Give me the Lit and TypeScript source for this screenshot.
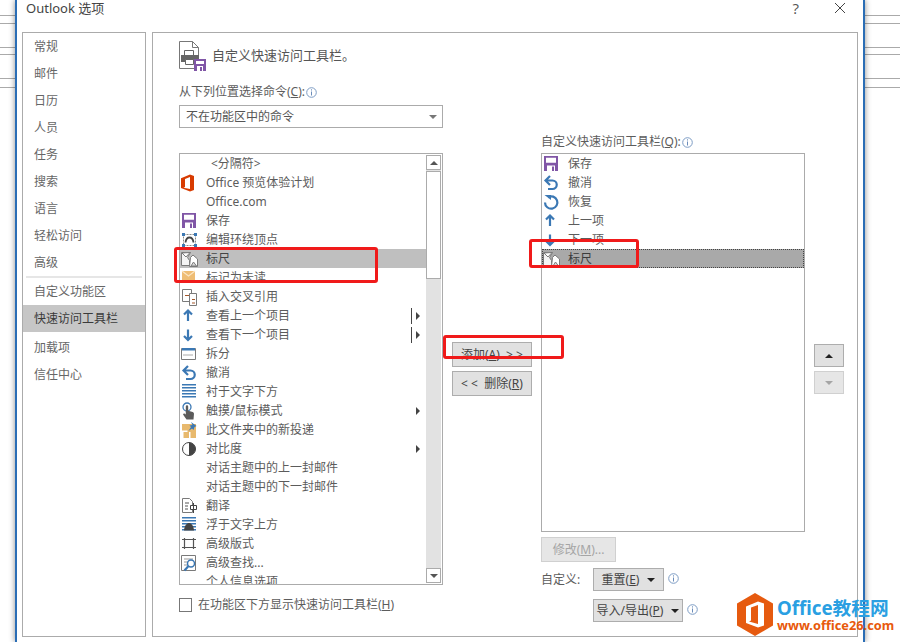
import { LitElement, html, css, svg } from "lit";
import { customElement } from "lit/decorators.js";

const BLUE = "#3b78b4";
const GREY = "#7a7a7a";
const PURPLE = "#8056a6";

const saveIcon = svg`<path fill="${PURPLE}" d="M1 1h14v15H1z"/><path fill="#fff" d="M3 2.800h10v5H3zM4 10.500h8V16H4z"/><path fill="${PURPLE}" d="M9 11.500h2V16H9z"/>`;

const stripes = svg`<g fill="${BLUE}"><path d="M1 1h14v1.600H1zM1 4h14v1.600H1zM1 7h14v1.600H1zM1 10h14v1.600H1zM1 13h14v1.600H1z"/></g>`;

const icons: Record<string, unknown> = {
  office: svg`<path fill="#d83b01" fill-rule="evenodd" d="M0 4.200 9 .6l4 1.400v14l-4 1.500-9-3.400ZM9 3 4 5v8l-1.500.8L9 15Z"/>`,
  save: saveIcon,
  wrap: svg`<path fill="none" stroke="#8a8a8a" d="M2.500 3.500h12v11h-12z" stroke-dasharray="2 1"/><path fill="none" stroke="#444" stroke-width="1.800" d="M4.500 11.500C5 7.500 7 6.500 8.500 6.500s3.500 1 4 5"/><path fill="${BLUE}" d="M1 2h3v3H1zM13 2h3v3h-3zM1 13h3v3H1zM13 13h3v3h-3z"/>`,
  ruler: svg`<path fill="#f4f4f4" stroke="${GREY}" d="M.5 2.500h9l-3 5 2 3v5h-8z"/><path fill="#fff" stroke="${GREY}" d="M9.500 7.500 12 5l4.500 4v7.500h-8z"/><path fill="#fff" stroke="${GREY}" d="M1 3l4 4 4-4.500z"/><path fill="#d9d9d9" stroke="${GREY}" d="m10 16 2.500-4 3 4z"/>`,
  mail: svg`<path fill="#efbd74" d="M1 2h13v10H1z"/><path fill="none" stroke="#fbe6c4" stroke-width="1.200" d="m1 2 6.500 5L14 2"/>`,
  xref: svg`<path fill="#fff" stroke="${GREY}" d="M1.500 1.500h9v12h-9z"/><path fill="#fff" stroke="${GREY}" d="M8.500 5.500h7v12h-7z"/><path fill="none" stroke="#a5582a" stroke-width="1.200" d="M4 7.500h4M11 11.500h3M11 15h3"/>`,
  up: svg`<path fill="none" stroke="${BLUE}" stroke-width="2.200" d="M7 14V4M3 7.500l4-4 4 4"/>`,
  down: svg`<path fill="none" stroke="${BLUE}" stroke-width="2.200" d="M7 3.500v10M3 10l4 4 4-4"/>`,
  split: svg`<path fill="#fff" stroke="${GREY}" d="M.5 3.500h14v11H.5z"/><path fill="${BLUE}" d="M1 3h13v2.500H1z"/><path stroke="#555" stroke-dasharray="1 1" d="M2.500 10h10"/>`,
  undo: svg`<path fill="none" stroke="${BLUE}" stroke-width="2.200" d="M3 6.500h6.500a4 4 0 0 1 0 8.500H5M7 2 2.500 6.500 7 11"/>`,
  redo: svg`<path fill="none" stroke="${BLUE}" stroke-width="2.200" d="M5 4.200a6.200 6.200 0 1 1-3 5.300"/><path fill="${BLUE}" d="M1.500 2h6.500v5z"/>`,
  behind: stripes,
  touch: svg`<circle cx="6" cy="5" r="4" fill="none" stroke="${BLUE}" stroke-width="1.300"/><path fill="#5b5b5b" d="M4.800 4.500a1.200 1.200 0 0 1 2.400 0v4.200l4.500 1.300q1.300.4 1.300 1.800l-.5 5.700H5.500L2 12.500l1-1.200 1.800 1.200Z"/>`,
  folder: svg`<path fill="#e8b96d" d="M1 3h14v14H1z"/><path fill="#fff" d="M1 9.500h5.500V11H2.500v6H1zM8 11h1.500v6H8z"/><path fill="${BLUE}" d="m10 1 5.500 4-2 1-1 3-1.500-1.500-3.500 2.500 2.500-4-1.500-1.500 3-.5z"/>`,
  contrast: svg`<circle cx="8" cy="9" r="6.500" fill="#fff" stroke="#444"/><path fill="#444" d="M8 2.500a6.500 6.500 0 0 1 0 13z"/>`,
  blank: svg``,
  translate: svg`<path fill="#fff" stroke="${GREY}" d="M1.500 1.500h7l3 3v11h-10z"/><path fill="none" stroke="#555" d="M4 6h4M4 9h3M4 12h3"/><path fill="#fff" stroke="#444" d="M9.500 8.500h6v4h-6z"/><path stroke="#444" d="M12.500 6v10"/>`,
  float: svg`${stripes}<path fill="#444" d="M3 14.500C3.500 9 6 7 8 7s4.500 2 5 7.500z"/>`,
  layout: svg`<path fill="none" stroke="#555" stroke-width="1.200" d="M3.500 3v11M12.500 3v11M1 4.500h14M1 12.500h14"/>`,
  find: svg`<path fill="#fff" stroke="${GREY}" d="M.5 1.500h14v15H.5z"/><path stroke="#999" d="M3 5h9M3 8h4M3 11h3"/><circle cx="10" cy="9.500" r="3.500" fill="#fff" stroke="${BLUE}" stroke-width="1.500"/><path stroke="${BLUE}" stroke-width="2.200" d="m7.500 12-4 4.500"/>`,
};

type Row = { i: string; t: string; sub?: "bar" | "arrow"; sel?: boolean; sep?: boolean };

const leftRows: Row[] = [
  { i: "blank", t: "<分隔符>", sep: true },
  { i: "office", t: "Office 预览体验计划" },
  { i: "blank", t: "Office.com" },
  { i: "save", t: "保存" },
  { i: "wrap", t: "编辑环绕顶点" },
  { i: "ruler", t: "标尺", sel: true },
  { i: "mail", t: "标记为未读" },
  { i: "xref", t: "插入交叉引用" },
  { i: "up", t: "查看上一个项目", sub: "bar" },
  { i: "down", t: "查看下一个项目", sub: "bar" },
  { i: "split", t: "拆分" },
  { i: "undo", t: "撤消" },
  { i: "behind", t: "衬于文字下方" },
  { i: "touch", t: "触摸/鼠标模式", sub: "arrow" },
  { i: "folder", t: "此文件夹中的新投递" },
  { i: "contrast", t: "对比度", sub: "arrow" },
  { i: "blank", t: "对话主题中的上一封邮件" },
  { i: "blank", t: "对话主题中的下一封邮件" },
  { i: "translate", t: "翻译" },
  { i: "float", t: "浮于文字上方" },
  { i: "layout", t: "高级版式" },
  { i: "find", t: "高级查找..." },
  { i: "blank", t: "个人信息选项" },
];

const rightRows: Row[] = [
  { i: "save", t: "保存" },
  { i: "undo", t: "撤消" },
  { i: "redo", t: "恢复" },
  { i: "up", t: "上一项" },
  { i: "down", t: "下一项" },
  { i: "ruler", t: "标尺", sel: true },
];

const navTop = ["常规", "邮件", "日历", "人员", "任务", "搜索", "语言", "轻松访问", "高级"];

@customElement("app-root")
export class AppRoot extends LitElement {
  static styles = css`
    :host {
      display: block;
      width: 900px;
      height: 642px;
      overflow: hidden;
      position: relative;
      background: #fff;
      color: #5c5c5c;
      font: 12px/14px "Noto Sans", "Noto Sans CJK SC", sans-serif;
    }
    * { box-sizing: border-box; }
    u { text-underline-offset: 1px; }
    .desk { display: flex; height: 642px; }
    .strip {
      flex: 1;
      background-color: #fff;
      background-repeat: no-repeat;
      background-size: 100% 1px;
      background-image:
        linear-gradient(#aaa, #aaa), linear-gradient(#aaa, #aaa), linear-gradient(#aaa, #aaa),
        linear-gradient(#aaa, #aaa), linear-gradient(#aaa, #aaa), linear-gradient(#aaa, #aaa);
      background-position: 0 15px, 0 23px, 0 47px, 0 54px, 0 78px, 0 87px;
    }
    .strip.l { flex: 0 0 15px; }
    .dialog {
      flex: 0 0 850px;
      background: #fff;
      border-left: 2px solid #2a6db5;
      border-right: 2px solid #2a6db5;
      box-shadow: 0 0 6px rgba(0, 0, 0, 0.45);
      padding-left: 5px;
      position: relative;
      z-index: 1;
    }
    .title {
      height: 32px;
      display: flex;
      align-items: flex-start;
      color: #444;
      font-size: 13px;
      line-height: 16px;
      padding-left: 4px;
    }
    .title .q { margin-left: auto; font: 15px/16px "Open Sans", sans-serif; color: #555; }
    .title svg { margin: 3px 18px 0 36px; }
    .main { display: flex; gap: 6px; height: 605px; }
    .nav { width: 124px; border: 1px solid #ababab; }
    .nav div.item { height: 27px; line-height: 27px; padding-left: 11px; color: #666; }
    .nav .rule { height: 2px; margin: 0 3px; background: #e6e6e6; }
    .nav div.active { background: #c6c6c6; color: #3a3a3a; margin-bottom: 2px; }
    .panel { width: 706px; border: 1px solid #ababab; padding-left: 26px; }
    .head { display: flex; height: 38px; padding-top: 8px; }
    .head span { font-size: 13px; line-height: 16px; margin: 6px 0 0 6px; color: #555; }
    .cols { display: flex; }
    .lcol { width: 264px; padding-top: 14px; }
    .mcol { width: 80px; margin-left: 9px; padding-top: 271px; display: flex; flex-direction: column; gap: 4px; }
    .rcol { width: 264px; margin-left: 9px; padding-top: 64px; }
    .acol { width: 30px; margin-left: 9px; padding-top: 273px; display: flex; flex-direction: column; gap: 4px; }
    .label { display: flex; align-items: center; height: 14px; white-space: nowrap; }
    .info { flex: none; margin-left: 1px; }
    .select {
      height: 23px;
      margin: 6px 0 25px;
      border: 1px solid #ababab;
      padding: 0 5px 0 6px;
      display: flex;
      align-items: center;
      justify-content: space-between;
      color: #555;
    }
    .select .tri-d { border-top-color: #777; }
    .list { border: 1px solid #ababab; display: flex; overflow: hidden; }
    .list.a { height: 432px; }
    .list.b { height: 379px; margin: 4px 0 5px; }
    .rows { flex: 1; min-width: 0; }
    .row { height: 19px; display: flex; align-items: center; white-space: nowrap; }
    .row svg.ic { flex: none; margin: 0 7px 0 1px; }
    .row.sep span { margin-left: 5px; }
    .row.sel { background: #bfbfbf; color: #444; }
    .b .row.sel { background: #a9a9a9; outline: 1px dotted #444; outline-offset: -1px; color: #3c3c3c; }
    .sub { margin-left: auto; display: flex; align-items: center; gap: 4px; padding-right: 6px; }
    .sub i { width: 1px; height: 16px; background: #444; }
    .sub b { width: 0; height: 0; border-left: 4px solid #444; border-top: 4px solid transparent; border-bottom: 4px solid transparent; }
    .scroll { width: 15px; margin: 1px 1px 1px 0; display: flex; flex-direction: column; background: #e2e2e2; }
    .sb {
      height: 15px;
      flex: none;
      background: #fff;
      border: 1px solid #ababab;
      display: flex;
      align-items: center;
      justify-content: center;
    }
    .thumb { height: 108px; flex: none; margin-top: 1px; background: #fff; border: 1px solid #ababab; }
    .grow { flex: 1; }
    .tri-u { width: 0; height: 0; border: 4px solid transparent; border-top: 0; border-bottom: 4px solid #555; }
    .tri-d { width: 0; height: 0; border: 4px solid transparent; border-bottom: 0; border-top: 4px solid #555; }
    .check { display: flex; align-items: center; margin-top: 13px; gap: 6px; }
    .check i { width: 13px; height: 14px; border: 1px solid #777; background: #fff; }
    .btn {
      height: 25px;
      flex: none;
      background: #e1e1e1;
      border: 1px solid #adadad;
      display: flex;
      align-items: center;
      justify-content: center;
      color: #444;
      white-space: pre;
    }
    .btn.small { height: 23px; }
    .btn.off { background: #e6e6e6; border-color: #d0d0d0; color: #a5a5a5; }
    .btn .tri-d { margin-left: 8px; border-top-color: #222; }
    .btn .tri-u { border-bottom-color: #222; }
    .btn.off .tri-d { border-top-color: #a5a5a5; margin: 0; }
    .modify { width: 75px; }
    .cust { display: flex; align-items: center; height: 23px; margin-top: 6px; }
    .cust + .cust { margin-top: 8px; padding-left: 52px; }
    .cust .lab { width: 52px; }
    .cust .info { margin: -3px 0 0 4px; }
    .w71 { width: 71px; }
    .w90 { width: 90px; }
    .mark { position: absolute; border: 3px solid #f01a1a; border-radius: 3px; pointer-events: none; z-index: 2; }
    .m1 { left: 174px; top: 247px; width: 204px; height: 36px; }
    .m2 { left: 529px; top: 239px; width: 110px; height: 29px; }
    .m3 { left: 443px; top: 335px; width: 121px; height: 24px; }
    .logo { position: absolute; left: 737px; top: 593px; display: flex; z-index: 3; }
    .logo .txt { margin-left: 4px; font-weight: 700; padding-top: 5px; }
    .logo .t1 { color: #2a9fe2; font-size: 18.700px; line-height: 20px; white-space: nowrap; }
    .logo .t2 { color: #e8590c; font-size: 12.800px; line-height: 14px; white-space: nowrap; }
  `;

  info() {
    return html`<svg class="info" width="11" height="11" viewBox="0 0 11 11"><circle cx="5.500" cy="5.500" r="4.800" fill="none" stroke="#7d9cc4"/><path stroke="#6a8cba" d="M5.500 4.500v4M5.500 2.300v1.200"/></svg>`;
  }

  rows(list: Row[]) {
    return list.map(
      (r) => html`<div class="row ${r.sel ? "sel" : ""} ${r.sep ? "sep" : ""}">
        <svg class="ic" width="18" height="18" viewBox="0 0 18 18">${icons[r.i]}</svg>
        <span>${r.t}</span>
        ${r.sub ? html`<div class="sub">${r.sub === "bar" ? html`<i></i>` : ""}<b></b></div>` : ""}
      </div>`
    );
  }

  render() {
    return html`
      <div class="desk">
        <div class="strip l"></div>
        <div class="dialog">
          <div class="title">
            <span>Outlook 选项</span>
            <span class="q">?</span>
            <svg width="10" height="10" viewBox="0 0 10 10"><path stroke="#444" fill="none" d="m0 0 10 10M10 0 0 10"/></svg>
          </div>
          <div class="main">
            <div class="nav">
              ${navTop.map((n) => html`<div class="item">${n}</div>`)}
              <div class="rule"></div>
              <div class="item">自定义功能区</div>
              <div class="item active">快速访问工具栏</div>
              <div class="item">加载项</div>
              <div class="item">信任中心</div>
            </div>
            <div class="panel">
              <div class="head">
                <svg width="27" height="30" viewBox="0 0 27 30">
                  <path fill="#fff" stroke="#777" d="M.5.500h13l6 6v21H.5z"/>
                  <path fill="none" stroke="#777" d="M13.500.500v6h6"/>
                  <path fill="#fff" stroke="#666" d="M5.500 9.500h9v5h-9z"/>
                  <path fill="#666" d="M2 14h18v7H2z"/>
                  <path fill="#fff" stroke="#666" d="M6.500 18.500h8v5h-8z"/>
                  <path fill="${PURPLE}" d="M15 18h12v12H15z"/>
                  <path fill="#fff" d="M17 20h8v3h-8zM18 25h6v5h-6z"/>
                  <path fill="${PURPLE}" d="M21 26h2v4h-2z"/>
                </svg>
                <span>自定义快速访问工具栏。</span>
              </div>
              <div class="cols">
                <div class="lcol">
                  <div class="label"><span>从下列位置选择命令(<u>C</u>):</span>${this.info()}</div>
                  <div class="select"><span>不在功能区中的命令</span><div class="tri-d"></div></div>
                  <div class="list a">
                    <div class="rows">${this.rows(leftRows)}</div>
                    <div class="scroll">
                      <div class="sb"><div class="tri-u"></div></div>
                      <div class="thumb"></div>
                      <div class="grow"></div>
                      <div class="sb"><div class="tri-d"></div></div>
                    </div>
                  </div>
                  <div class="check"><i></i><span>在功能区下方显示快速访问工具栏(<u>H</u>)</span></div>
                </div>
                <div class="mcol">
                  <div class="btn">添加(<u>A</u>)  &gt; &gt;</div>
                  <div class="btn">&lt; &lt;  删除(<u>R</u>)</div>
                </div>
                <div class="rcol">
                  <div class="label"><span>自定义快速访问工具栏(<u>Q</u>):</span>${this.info()}</div>
                  <div class="list b"><div class="rows">${this.rows(rightRows)}</div></div>
                  <div class="btn off modify">修改(<u>M</u>)...</div>
                  <div class="cust">
                    <span class="lab">自定义:</span>
                    <div class="btn small w71">重置(<u>E</u>)<div class="tri-d"></div></div>
                    ${this.info()}
                  </div>
                  <div class="cust">
                    <div class="btn small w90">导入/导出(<u>P</u>)<div class="tri-d"></div></div>
                    ${this.info()}
                  </div>
                </div>
                <div class="acol">
                  <div class="btn small"><div class="tri-u"></div></div>
                  <div class="btn small off"><div class="tri-d"></div></div>
                </div>
              </div>
            </div>
          </div>
        </div>
        <div class="strip"></div>
      </div>
      <div class="mark m1"></div>
      <div class="mark m2"></div>
      <div class="mark m3"></div>
      <div class="logo">
        <svg width="36" height="43" viewBox="0 0 36 43">
          <path fill="#e65a0f" d="M18 0 36 10.500v22L18 43 0 32.500v-22z"/>
          <path fill="#fff" fill-rule="evenodd" d="M9 13.500 21 8.500l6 2v22l-6 2-12-4.500zM21 12l-7 2.500v13l-2 1 9 2.500z"/>
        </svg>
        <div class="txt">
          <div class="t1">Office教程网</div>
          <div class="t2">www.office26.com</div>
        </div>
      </div>
    `;
  }
}
